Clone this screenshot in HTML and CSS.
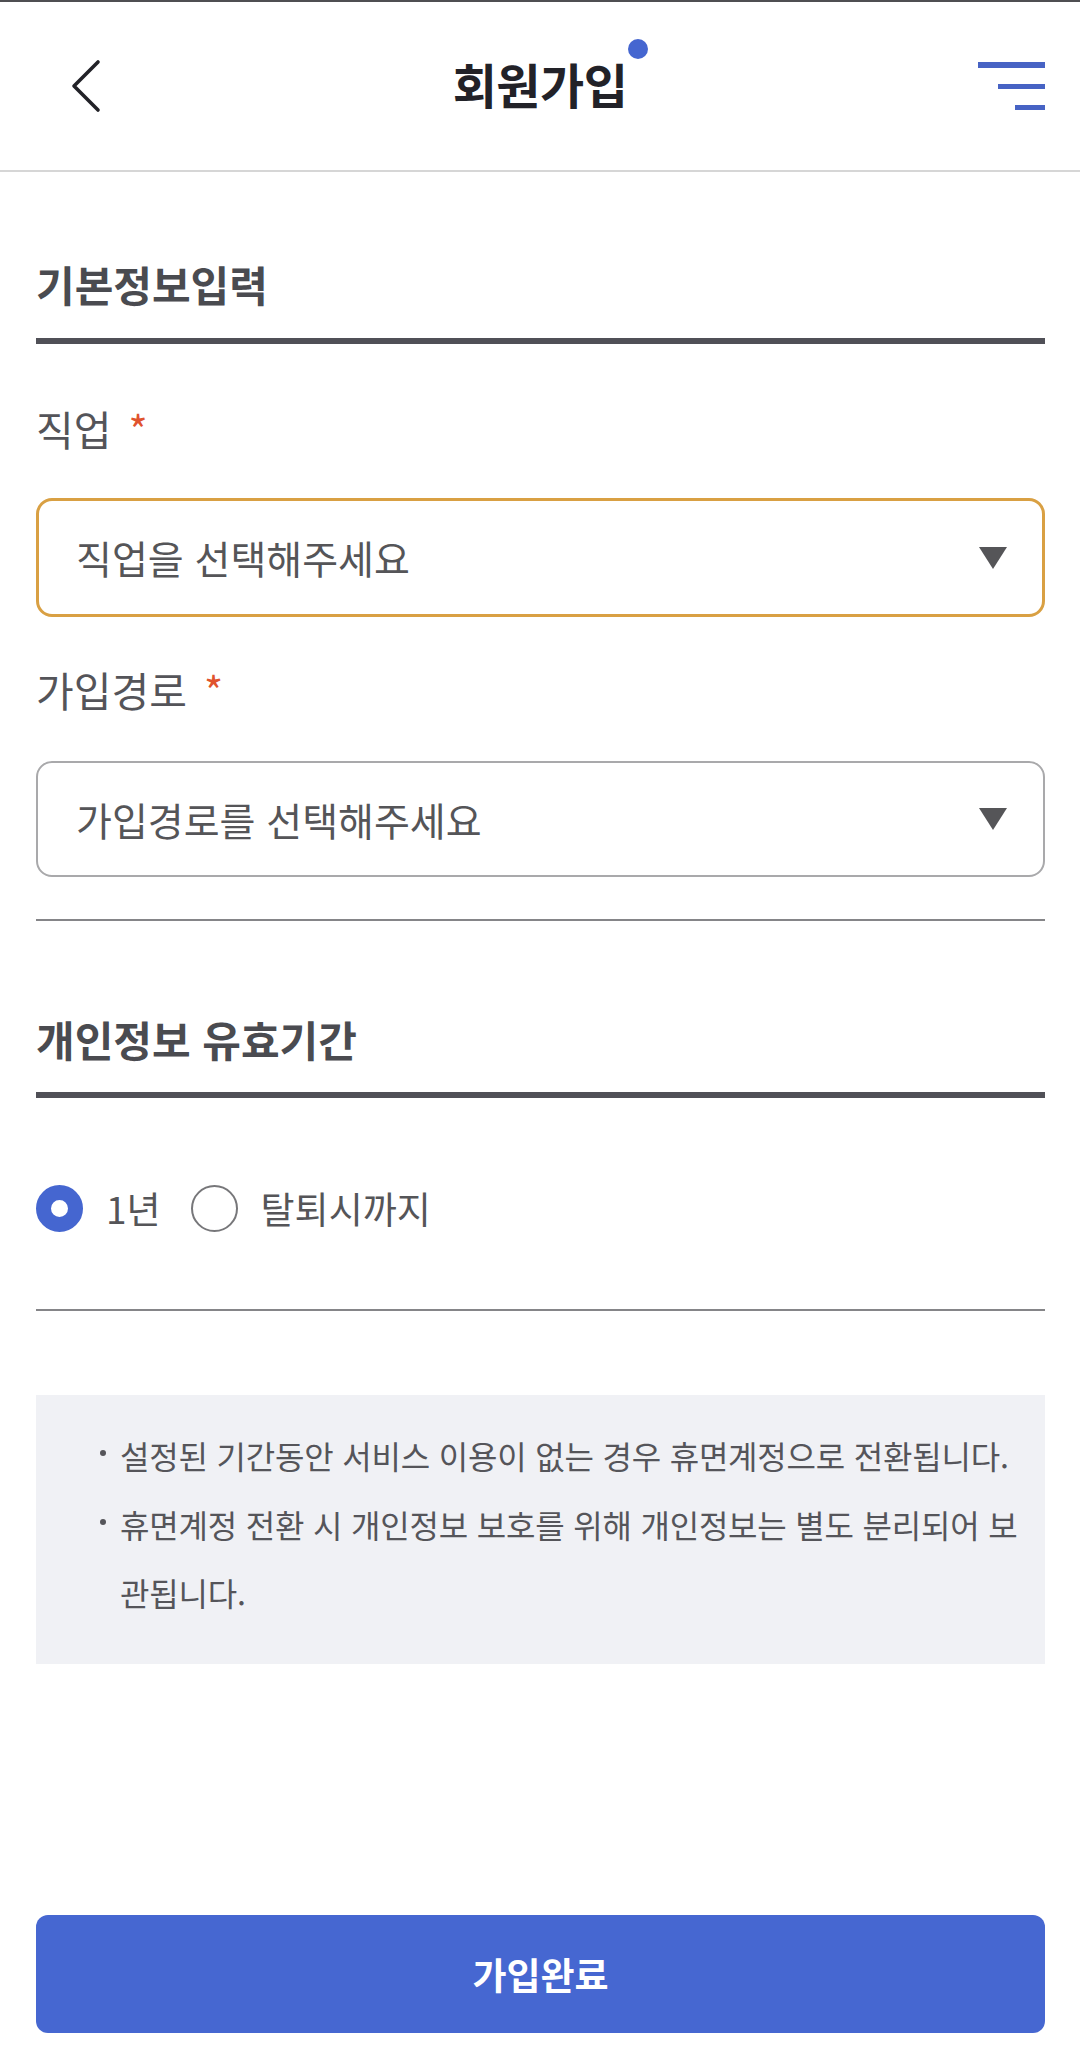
FILE: index.html
```html
<!DOCTYPE html>
<html lang="ko">
<head>
<meta charset="utf-8">
<title>회원가입</title>
<link rel="stylesheet" href="styles.css">
</head>
<body>
<div class="page">
  <header class="topbar">
    <button class="back" aria-label="뒤로">
      <svg width="32" height="54" viewBox="0 0 32 54"><path d="M28 3 L4 27 L28 51" fill="none" stroke="#222228" stroke-width="3.6" stroke-linecap="round" stroke-linejoin="round"/></svg>
    </button>
    <h1 class="title">회원가입<span class="title-dot"></span></h1>
    <div class="menu" aria-label="메뉴">
      <span class="bar bar1"></span>
      <span class="bar bar2"></span>
      <span class="bar bar3"></span>
    </div>
  </header>

  <main class="content">
    <h2 class="sec-title sec-first">기본정보입력</h2>

    <div class="label label-first">직업<span class="req">*</span></div>
    <div class="select select-focus">
      <span class="select-text">직업을 선택해주세요</span>
      <svg class="caret" width="28" height="22" viewBox="0 0 28 22"><polygon points="0,0 28,0 14,22" fill="#555558"/></svg>
    </div>

    <div class="label label-second">가입경로<span class="req">*</span></div>
    <div class="select select-normal">
      <span class="select-text">가입경로를 선택해주세요</span>
      <svg class="caret" width="28" height="22" viewBox="0 0 28 22"><polygon points="0,0 28,0 14,22" fill="#555558"/></svg>
    </div>

    <hr class="divider divider-first">

    <h2 class="sec-title sec-second">개인정보 유효기간</h2>

    <div class="radio-group">
      <label class="radio-opt"><span class="radio radio-on"></span><span class="radio-text">1년</span></label>
      <label class="radio-opt"><span class="radio"></span><span class="radio-text">탈퇴시까지</span></label>
    </div>

    <hr class="divider divider-second">

    <ul class="info">
      <li>설정된 기간동안 서비스 이용이 없는 경우 휴면계정으로 전환됩니다.</li>
      <li>휴면계정 전환 시 개인정보 보호를 위해 개인정보는 별도 분리되어 보관됩니다.</li>
    </ul>

    <button class="submit">가입완료</button>
  </main>
</div>
</body>
</html>
```

FILE: styles.css
```css
html, body {
  margin: 0;
  padding: 0;
  background: #ffffff;
}

body {
  font-family: "Noto Sans CJK KR", "Noto Sans", sans-serif;
  color: #545459;
}

.page {
  width: 1080px;
  border-top: 2px solid #4f4f52;
}

/* Header */
.topbar {
  height: 168px;
  border-bottom: 2px solid #d6d6d6;
  display: grid;
  grid-template-columns: 1fr auto 1fr;
  align-items: center;
  padding: 0 35px;
}

.back {
  justify-self: start;
  background: none;
  border: 0;
  padding: 0;
  margin: 0 0 0 35px;
  display: flex;
}

.title {
  position: relative;
  margin: 0 0 6px;
  font-size: 48px;
  line-height: 48px;
  font-weight: 700;
  color: #222228;
  letter-spacing: -0.5px;
}

.title-dot {
  position: absolute;
  right: -21px;
  top: -20px;
  width: 20px;
  height: 20px;
  border-radius: 50%;
  background: #4566d0;
}

.menu {
  justify-self: end;
  display: flex;
  flex-direction: column;
  align-items: flex-end;
  gap: 16px;
}

.bar {
  display: block;
  background: #4763c4;
}

.bar1 { width: 67px; height: 6px; }
.bar2 { width: 47px; height: 5px; }
.bar3 { width: 30px; height: 5px; }

/* Content */
.content {
  padding: 0 35px 34px 36px;
}

.sec-title {
  margin: 0;
  font-size: 42px;
  line-height: 42px;
  font-weight: 700;
  color: #4a4b50;
  padding-bottom: 33px;
  border-bottom: 6px solid #505057;
}

.sec-first { margin-top: 91px; }
.sec-second { margin-top: 97px; padding-bottom: 32px; }

.label {
  font-size: 41px;
  line-height: 41px;
  color: #545459;
}

.label-first { margin-top: 64px; }
.label-second { margin-top: 52px; }

.req {
  color: #e0532e;
  margin-left: 17px;
}

.select {
  box-sizing: border-box;
  display: flex;
  align-items: center;
  justify-content: space-between;
  border-radius: 16px;
  background: #fff;
  margin-top: 49px;
}

.select-focus {
  height: 119px;
  border: 3px solid #d9a043;
  padding: 0 35px 0 37px;
}

.select-normal {
  height: 116px;
  border: 2px solid #a9a9ab;
  padding: 0 36px 0 38px;
  margin-top: 51px;
}

.select-text {
  font-size: 39px;
  line-height: 39px;
  color: #555558;
}

.caret {
  display: block;
}

.divider {
  margin: 0;
  border: 0;
  height: 2px;
  background: #858588;
}

.divider-first { margin-top: 42px; }
.divider-second { margin-top: 77px; }

/* Radios */
.radio-group {
  display: flex;
  align-items: center;
  gap: 30px;
  margin-top: 87px;
  height: 47px;
}

.radio-opt {
  display: flex;
  align-items: center;
  gap: 23px;
}

.radio {
  box-sizing: border-box;
  width: 47px;
  height: 47px;
  border-radius: 50%;
  border: 2px solid #77777a;
  background: #fff;
}

.radio-on {
  border: 15px solid #4566d0;
}

.radio-text {
  font-size: 37px;
  line-height: 37px;
  color: #555558;
}

/* Info box */
.info {
  list-style: none;
  margin: 84px 0 0;
  padding: 26px 10px 37px 64px;
  background: #f0f1f5;
}

.info li {
  display: flex;
  align-items: flex-start;
  font-size: 32px;
  line-height: 68.5px;
  color: #55555a;
  letter-spacing: -0.2px;
  word-break: break-all;
}

.info li::before {
  content: "";
  flex: none;
  width: 6px;
  height: 6px;
  border-radius: 50%;
  background: #55555a;
  margin-top: 29px;
  margin-right: 14px;
}

/* Button */
.submit {
  display: block;
  width: 100%;
  height: 118px;
  margin-top: 251px;
  border: 0;
  border-radius: 12px;
  background: #4667d1;
  color: #ffffff;
  font-family: "Noto Sans CJK KR", "Noto Sans", sans-serif;
  font-size: 37px;
  font-weight: 700;
  padding: 0;
}
```
